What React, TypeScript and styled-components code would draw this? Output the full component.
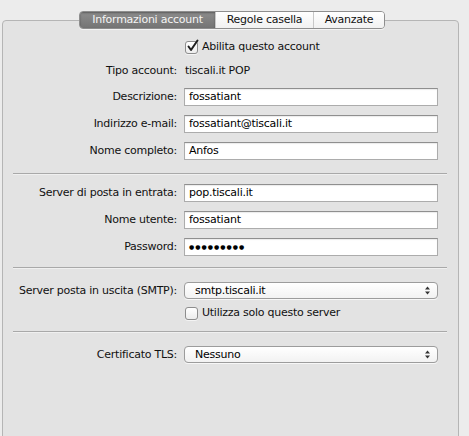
import React from "react";
import styled, { createGlobalStyle } from "styled-components";

const GlobalStyle = createGlobalStyle`
  html, body {
    margin: 0;
    padding: 0;
    background: #ececec;
  }
  body {
    font-family: "Lucida Grande", "DejaVu Sans", sans-serif;
    font-size: 11px;
    letter-spacing: -0.25px;
    color: #111;
  }
`;

const Window = styled.div`
  width: 469px;
  height: 436px;
  overflow: hidden;
  padding: 11px 0 0 2px;
  box-sizing: border-box;
  display: flex;
  flex-direction: column;
`;

const TabBar = styled.div`
  position: relative;
  z-index: 1;
  flex-shrink: 0;
  align-self: flex-start;
  margin-left: 77px;
  display: flex;
  height: 18px;
  box-sizing: border-box;
  border: 1px solid #8e8e8e;
  border-radius: 4px;
  overflow: hidden;
  box-shadow: 0 1px 0 rgba(255, 255, 255, 0.6);
`;

const Tab = styled.div<{ $active?: boolean; $w: number }>`
  width: ${(p) => p.$w}px;
  display: flex;
  align-items: center;
  justify-content: center;
  line-height: 16px;
  color: ${(p) => (p.$active ? "#f4f4f4" : "#111")};
  background: ${(p) =>
    p.$active
      ? "linear-gradient(#8c8c8c, #747474)"
      : "linear-gradient(#ffffff, #f1f1f1)"};
  box-shadow: ${(p) => (p.$active ? "inset 0 1px 2px rgba(0,0,0,0.35)" : "none")};
  & + & {
    border-left: 1px solid #c8c8c8;
  }
`;

const Box = styled.div`
  flex-shrink: 0;
  margin-top: -9px;
  width: 457px;
  min-height: 430px;
  box-sizing: border-box;
  border: 1px solid #b5b5b5;
  border-radius: 4px;
  background: #e3e3e3;
  padding-top: 19px;
  display: flex;
  flex-direction: column;
`;

const Section = styled.div<{ $gap?: number }>`
  display: grid;
  grid-template-columns: 174px 254px;
  column-gap: 7px;
  row-gap: ${(p) => p.$gap ?? 9}px;
  align-items: center;
`;

const Label = styled.div`
  text-align: right;
  white-space: nowrap;
  line-height: 16px;
`;

const Value = styled.div`
  line-height: 16px;
  padding-left: 1px;
`;

const Field = styled.div`
  height: 18px;
  box-sizing: border-box;
  background: #fff;
  border: 1px solid #acacac;
  border-top-color: #8f8f8f;
  box-shadow: inset 0 1px 1px rgba(0, 0, 0, 0.08);
  padding-left: 4px;
  line-height: 16px;
  white-space: nowrap;
  overflow: hidden;
  color: #000;
`;

const Dots = styled.span`
  font-family: "DejaVu Sans", sans-serif;
  font-size: 6px;
  letter-spacing: 1px;
  vertical-align: 1px;
`;

const Popup = styled.div`
  height: 17px;
  box-sizing: border-box;
  border: 1px solid #9c9c9c;
  border-radius: 4px;
  background: linear-gradient(#ffffff, #f2f2f2);
  box-shadow: 0 1px 0 rgba(255, 255, 255, 0.7);
  display: flex;
  align-items: center;
  padding: 0 7px 0 10px;
  line-height: 15px;
  color: #000;
`;

const PopupText = styled.span`
  flex: 1;
`;

const CheckRow = styled.label`
  grid-column: 2;
  display: flex;
  align-items: center;
  gap: 4px;
  height: 14px;
  line-height: 14px;
`;

const Check = styled.span`
  position: relative;
  width: 13px;
  height: 13px;
  box-sizing: border-box;
  margin-left: 1px;
  border: 1px solid #8d8d8d;
  border-radius: 3px;
  background: linear-gradient(#ffffff, #ececec);
  box-shadow: 0 1px 0 rgba(255, 255, 255, 0.6);
`;

const Separator = styled.div<{ $top: number; $bottom: number }>`
  height: 1px;
  background: #a9a9a9;
  box-shadow: 0 1px 0 rgba(255, 255, 255, 0.45);
  margin: ${(p) => p.$top}px 11px ${(p) => p.$bottom}px 10px;
`;

const CheckMark = () => (
  <svg
    width="13"
    height="13"
    viewBox="0 0 13 13"
    style={{ position: "absolute", left: 0, top: -3 }}
  >
    <path
      d="M2.5 7.5 L5 11 L11.5 1.5"
      fill="none"
      stroke="#1e1e1e"
      strokeWidth="2"
      strokeLinecap="round"
      strokeLinejoin="round"
    />
  </svg>
);

const Arrows = () => (
  <svg width="5" height="9" viewBox="0 0 5 9">
    <path d="M0 3.5 L2.5 0.5 L5 3.5 Z" fill="#333" />
    <path d="M0 5.5 L2.5 8.5 L5 5.5 Z" fill="#333" />
  </svg>
);

export default function App() {
  return (
    <>
      <GlobalStyle />
      <Window>
        <TabBar>
          <Tab $active $w={135}>
            Informazioni account
          </Tab>
          <Tab $w={97}>Regole casella</Tab>
          <Tab $w={70}>Avanzate</Tab>
        </TabBar>
        <Box>
          <Section>
            <CheckRow>
              <Check>
                <CheckMark />
              </Check>
              Abilita questo account
            </CheckRow>
            <Label>Tipo account:</Label>
            <Value>tiscali.it POP</Value>
            <Label>Descrizione:</Label>
            <Field>fossatiant</Field>
            <Label>Indirizzo e-mail:</Label>
            <Field>fossatiant@tiscali.it</Field>
            <Label>Nome completo:</Label>
            <Field>Anfos</Field>
          </Section>
          <Separator $top={13} $bottom={10} />
          <Section>
            <Label>Server di posta in entrata:</Label>
            <Field>pop.tiscali.it</Field>
            <Label>Nome utente:</Label>
            <Field>fossatiant</Field>
            <Label>Password:</Label>
            <Field>
              <Dots>●●●●●●●●●</Dots>
            </Field>
          </Section>
          <Separator $top={11} $bottom={14} />
          <Section $gap={7}>
            <Label>Server posta in uscita (SMTP):</Label>
            <Popup>
              <PopupText>smtp.tiscali.it</PopupText>
              <Arrows />
            </Popup>
            <CheckRow>
              <Check />
              Utilizza solo questo server
            </CheckRow>
          </Section>
          <Separator $top={11} $bottom={14} />
          <Section>
            <Label>Certificato TLS:</Label>
            <Popup>
              <PopupText>Nessuno</PopupText>
              <Arrows />
            </Popup>
          </Section>
        </Box>
      </Window>
    </>
  );
}
